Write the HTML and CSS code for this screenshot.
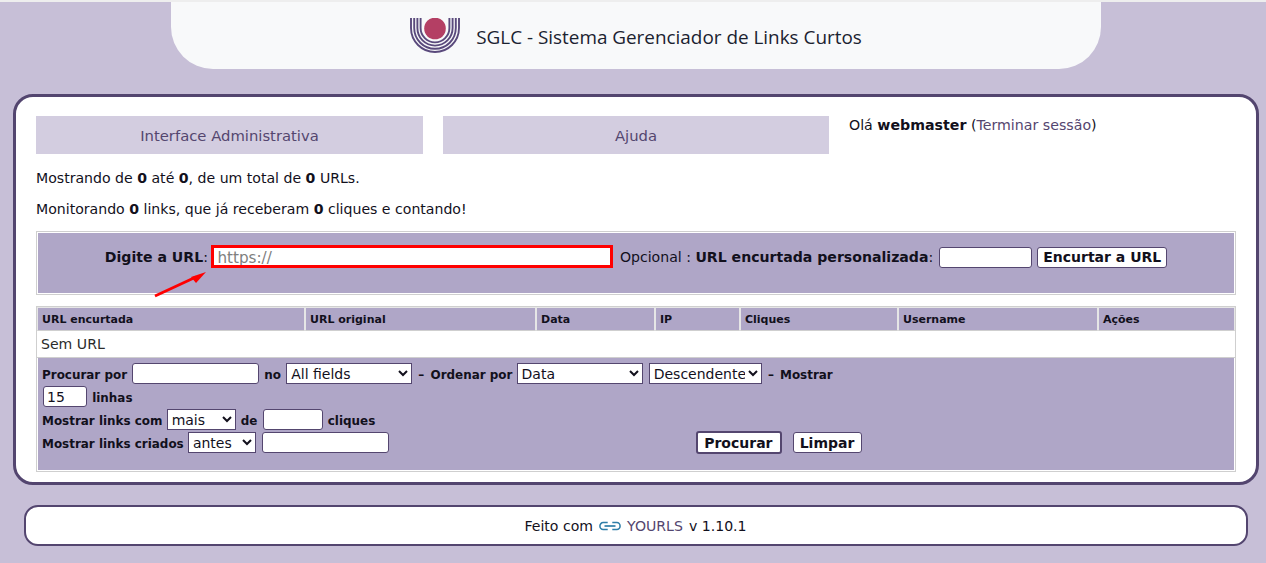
FILE: index.html
```html
<!DOCTYPE html>
<html lang="pt">
<head>
<meta charset="utf-8">
<title>SGLC - Sistema Gerenciador de Links Curtos</title>
<link rel="stylesheet" href="styles.css">
</head>
<body>
<header class="top">
  <svg class="logo" width="50" height="36" viewBox="0 0 50 36" aria-hidden="true">
    <g fill="none" stroke="#5a4a7c" stroke-width="1.9">
      <path d="M1 0V10A24 24 0 0 0 49 10V0"/>
      <path d="M4.2 0V10A20.8 20.8 0 0 0 45.8 10V0"/>
      <path d="M7.4 0V10A17.6 17.6 0 0 0 42.6 10V0"/>
      <path d="M10.6 0V10A14.4 14.4 0 0 0 39.4 10V0"/>
    </g>
    <circle cx="25" cy="10.5" r="10.8" fill="#b43f64"/>
  </svg>
  <span class="title">SGLC - Sistema Gerenciador de Links Curtos</span>
</header>

<main class="wrap">
  <div class="navrow">
    <a class="tab">Interface Administrativa</a>
    <a class="tab">Ajuda</a>
    <p class="hello">Olá <b>webmaster</b> (<a class="link">Terminar sessão</a>)</p>
  </div>
  <p class="stat">Mostrando de <b>0</b> até <b>0</b>, de um total de <b>0</b> URLs.</p>
  <p class="stat second">Monitorando <b>0</b> links, que já receberam <b>0</b> cliques e contando!</p>

  <form class="newurl">
    <b>Digite a URL</b>:
    <input class="urlbox" type="text" placeholder="https://">
    <span class="opt">Opcional : <b>URL encurtada personalizada</b>:</span>
    <input class="keyword" type="text">
    <button class="btn" type="button">Encurtar a URL</button>
    <svg class="arrow" width="70" height="34" viewBox="0 0 70 34" aria-hidden="true">
      <path d="M2 31L43 12" stroke="#f00" stroke-width="2.8" fill="none"/>
      <path d="M53 7L38 12L43 18Z" fill="#f00"/>
    </svg>
  </form>

  <table class="grid">
    <colgroup>
      <col class="c1"><col class="c2"><col class="c3"><col class="c4"><col class="c5"><col class="c6"><col class="c7">
    </colgroup>
    <thead>
      <tr><th>URL encurtada</th><th>URL original</th><th>Data</th><th>IP</th><th>Cliques</th><th>Username</th><th>Ações</th></tr>
    </thead>
    <tbody>
      <tr><td class="empty" colspan="7">Sem URL</td></tr>
    </tbody>
    <tfoot>
      <tr><td class="filters" colspan="7">
        <div class="frow">Procurar por <input class="f-search" type="text"> no
          <select class="s-field"><option>All fields</option></select> <span class="dash">–</span> Ordenar por
          <select class="s-order"><option>Data</option></select>
          <select class="s-dir"><option>Descendente</option></select> <span class="dash">–</span> Mostrar</div>
        <div class="frow"><input class="f-num" type="text" value="15"> linhas</div>
        <div class="frow">Mostrar links com
          <select class="s-more"><option>mais</option></select> de
          <input class="f-clicks" type="text"> cliques</div>
        <div class="frow">Mostrar links criados
          <select class="s-date"><option>antes</option></select>
          <input class="f-search" type="text">
          <span class="actions">
            <button class="btn primary" type="button">Procurar</button>
            <button class="btn" type="button">Limpar</button>
          </span></div>
      </td></tr>
    </tfoot>
  </table>
</main>

<footer class="foot">
  Feito com
  <svg class="chain" width="22" height="10" viewBox="0 0 24 10" preserveAspectRatio="none" aria-hidden="true">
    <g fill="none" stroke="#2f7ea8" stroke-width="1.7">
      <path d="M9.5 1.5H4.5A3.5 3.5 0 0 0 4.5 8.5H9.5"/>
      <path d="M14.5 1.5H19.5A3.5 3.5 0 0 1 19.5 8.5H14.5"/>
      <path d="M6 5H18"/>
    </g>
  </svg>
  <a class="link">YOURLS</a> v 1.10.1
</footer>
</body>
</html>
```
FILE: styles.css
```css
* { box-sizing: border-box; }
html, body { margin: 0; padding: 0; }
body {
  height: 563px;
  overflow: hidden;
  background: #c7bfd7;
  border-top: 2px solid #eeeeee;
  font: 14.1px "DejaVu Sans", Verdana, sans-serif;
  color: #12101c;
}
.top {
  width: 930px;
  height: 67px;
  margin: 0 0 25px 171px;
  background: #f8f9fa;
  border-radius: 0 0 42px 42px;
  display: flex;
  align-items: center;
  justify-content: center;
  gap: 16px;
}
.logo { display: block; align-self: flex-start; margin-top: 16px; }
.title { font: 18.9px "Open Sans", "Noto Sans", sans-serif; color: #1b2230; padding-top: 2px; }
.wrap {
  width: 1246px;
  height: 391px;
  margin-left: 13px;
  padding: 19px 20px 0;
  background: #fff;
  border: 3px solid #53456f;
  border-radius: 20px;
}
.navrow { display: flex; gap: 20px; height: 38px; }
.tab {
  width: 387px;
  background: #d3cde0;
  color: #54466f;
  font-size: 14.8px;
  padding-top: 1px;
  display: flex;
  align-items: center;
  justify-content: center;
}
.tab + .tab { width: 386px; }
.hello { margin: 0; line-height: 18px; font-size: 14.2px; }
.link { color: #54466f; }
.stat { margin: 16px 0 0; line-height: 17px; }
.stat.second { margin-top: 14px; }
.newurl {
  position: relative;
  height: 64px;
  margin-top: 13px;
  padding-top: 13px;
  background: #afa6c7;
  border: 1px solid #cfcfcf;
  box-shadow: inset 0 0 0 1px #fff;
  text-align: center;
  width: 1200px;
}
.urlbox {
  width: 402px;
  height: 23px;
  border: 3px solid #f00;
  padding: 2px 3px 0;
  margin: 0 2px 3px -1px;
  font: 15.2px "DejaVu Sans", sans-serif;
  vertical-align: middle;
}
.urlbox::placeholder { color: #808080; }
.opt { margin-right: 3px; }
.keyword {
  width: 93px;
  height: 21px;
  border: 1px solid #54466f;
  border-radius: 3px;
  vertical-align: middle;
  margin: 0 1px 2px -2px;
}
.btn {
  height: 21px;
  padding: 0 5px;
  border: 1px solid #54466f;
  border-radius: 3px;
  background: #fff;
  font: bold 14px "DejaVu Sans", sans-serif;
  color: #12101c;
  vertical-align: middle;
}
.newurl .btn { margin-bottom: 2px; }
.arrow { position: absolute; left: 116px; top: 33px; }
.grid {
  width: 1200px;
  margin-top: 11px;
  table-layout: fixed;
  border-collapse: separate;
  border-spacing: 0;
  border: 1px solid #cfcfcf;
}
.c1 { width: 268px; }
.c2 { width: 231px; }
.c3 { width: 119px; }
.c4 { width: 85px; }
.c5 { width: 158px; }
.c6 { width: 200px; }
.grid th {
  height: 24px;
  padding: 0 4px;
  background: #afa6c7;
  border: 1px solid #e6e6e6;
  border-bottom-color: #cfcfcf;
  text-align: left;
  font-size: 11px;
  font-weight: bold;
}
.empty {
  height: 27px;
  padding: 0 4px;
  color: #2b2b2b;
  border-bottom: 1px solid #cfcfcf;
}
.filters {
  height: 113px;
  padding: 5px 4px 0;
  vertical-align: top;
  background: #afa6c7;
  border: 1px solid #fff;
  border-top: 0;
  font-size: 11.95px;
  font-weight: bold;
}
.frow { height: 23px; line-height: 25px; white-space: nowrap; }
.filters input, .filters select {
  height: 21px;
  vertical-align: top;
  border: 1px solid #54466f;
  background: #fff;
  font: 14px "DejaVu Sans", sans-serif;
  color: #12101c;
}
.filters input { border-radius: 3px; padding: 0 3px; margin: 0 1px; }
.filters select { margin: 0 2px 0 1px; }
.filters .s-order { margin: 0 2px 0 0; }
.filters .s-dir { margin: 0 2px 0 0; }
.dash { margin-right: 2px; }
.f-search { width: 127px; }
.s-field { width: 126px; }
.s-order { width: 126px; }
.s-dir { width: 113px; }
.f-num { width: 44px; }
.filters .s-more { width: 69px; margin: 0 1px 0 0; }
.f-clicks { width: 60px; }
.filters .f-clicks { margin-left: 1px; }
.filters .s-date { width: 68px; margin: 0 1px 0 0; }
.actions { margin-left: 302px; }
.actions .btn { margin: 0 0 0 7px; padding: 0 7px 0 6px; vertical-align: top; }
.actions .btn.primary { border-width: 2px; height: 23px; margin: -1px 0 0; }
.foot {
  width: 1224px;
  height: 41px;
  margin: 20px 0 0 24px;
  background: #fff;
  border: 2px solid #53456f;
  border-radius: 14px;
  display: flex;
  align-items: center;
  justify-content: center;
  gap: 6px;
  padding-right: 1px;
}
```
